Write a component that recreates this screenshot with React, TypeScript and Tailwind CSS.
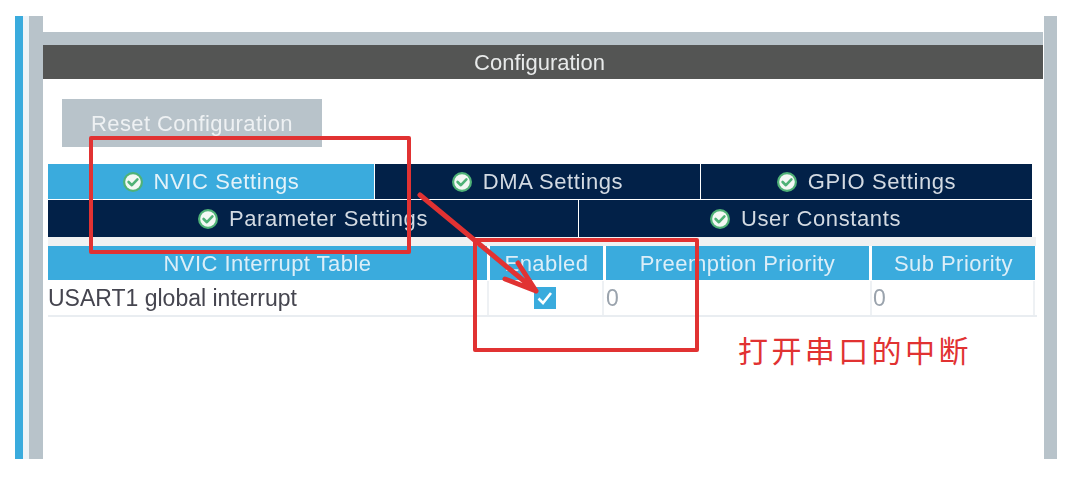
const NAVY = "flex items-center justify-center gap-[11px] bg-[#022148] text-[#d3dae2]";

function Ok() {
  return (
    <svg width="20" height="20" viewBox="0 0 20 20" className="shrink-0">
      <circle cx="10" cy="10" r="10" fill="#4fb277" />
      <circle cx="10" cy="10" r="7.8" fill="#f3f8f4" />
      <path d="M5.6 10 L8.9 13.2 L14.4 7.4" fill="none" stroke="#4fb277" strokeWidth="2.6" strokeLinecap="round" strokeLinejoin="round" />
    </svg>
  );
}

function Tab({ label, className }: { label: string; className: string }) {
  return (
    <div className={className}>
      <Ok />
      <span>{label}</span>
    </div>
  );
}

export default function App() {
  return (
    <div className="relative h-[478px] w-[1088px] overflow-hidden bg-white pl-[15px] pt-[16px] font-['Liberation_Sans',sans-serif]">
      <div className="flex h-[443px] w-[1042px] blur-[0.6px]">
        <div className="w-[8px] bg-[#3aabdd]" />
        <div className="w-[6px] bg-[#eef3f7]" />
        <div className="w-[14px] bg-[#b8c3ca]" />
        <div className="flex w-[1001px] flex-col pt-[16px]">
          <div className="h-[13px] bg-[#b8c3ca]" />
          <div className="flex h-[34px] items-center justify-center bg-[#545554] pr-[7px] text-[22px] text-[#e8eaea]">
            Configuration
          </div>
          <div className="px-[5px] pt-[20px]">
            <div className="ml-[14px] flex h-[48px] w-[260px] items-center justify-center bg-[#b8c3ca] text-[22px] tracking-[0.4px] text-[#eef1f3]">
              Reset Configuration
            </div>
            <div className="mt-[17px] flex h-[35px] w-[984px] gap-[1px] text-[22px] tracking-[0.6px]">
              <Tab label="NVIC Settings" className="flex w-[326px] items-center justify-center gap-[11px] bg-[#3aabdd] text-[#e3f2f9]" />
              <Tab label="DMA Settings" className={`w-[325px] ${NAVY}`} />
              <Tab label="GPIO Settings" className={`w-[331px] ${NAVY}`} />
            </div>
            <div className="mt-[1px] flex h-[37px] w-[984px] gap-[1px] text-[22px] tracking-[0.6px]">
              <Tab label="Parameter Settings" className={`w-[530px] ${NAVY}`} />
              <Tab label="User Constants" className={`w-[453px] ${NAVY}`} />
            </div>
            <div className="flex h-[9px] w-[988px] bg-[#f0f1f2]" />
            <div className="flex h-[34px] w-[987px] text-[22px] tracking-[0.45px] text-[#dceef8]">
              <div className="flex w-[439px] items-center justify-center bg-[#3aabdd]">NVIC Interrupt Table</div>
              <div className="ml-[3px] flex w-[113px] items-center justify-center bg-[#3aabdd]">Enabled</div>
              <div className="ml-[3px] flex w-[263px] items-center justify-center bg-[#3aabdd]">Preemption Priority</div>
              <div className="ml-[3px] flex w-[163px] items-center justify-center bg-[#3aabdd]">Sub Priority</div>
            </div>
            <div className="mt-[1px] flex h-[36px] w-[989px] border-b-2 border-[#e9edf1] text-[23px] text-[#45454f]">
              <div className="flex w-[439px] items-center">USART1 global interrupt</div>
              <div className="flex w-[117px] items-center justify-center border-x-2 border-[#eef1f4]">
                <div className="flex h-[22px] w-[22px] items-center justify-center bg-[#3aabdd]">
                  <svg width="22" height="22" viewBox="0 0 22 22">
                    <path d="M4.5 11.5 L9 16 L17 6" fill="none" stroke="#fff" strokeWidth="2.6" />
                  </svg>
                </div>
              </div>
              <div className="flex w-[266px] items-center pl-[2px] text-[#9aa3ad]">0</div>
              <div className="flex w-[165px] items-center border-x-2 border-[#eef1f4] pl-[1px] text-[#9aa3ad]">0</div>
            </div>
          </div>
        </div>
        <div className="ml-[1px] w-[13px] bg-[#b8c3ca]" />
      </div>

      <div className="absolute left-[89px] top-[136px] h-[118px] w-[322px] rounded-[2px] border-[4.5px] border-[#e13232]" />
      <div className="absolute left-[473px] top-[238px] h-[114px] w-[226px] rounded-[2px] border-[4.5px] border-[#e13232]" />
      <svg className="absolute left-0 top-0" width="1088" height="478" viewBox="0 0 1088 478">
        <path d="M420 195 L536 291 M505 279 L536 291 L518 263" fill="none" stroke="#e13232" strokeWidth="5" strokeLinecap="round" strokeLinejoin="round" />
      </svg>
      <div className="absolute left-[738px] top-[329px] whitespace-nowrap font-['Noto_Sans_CJK_SC',sans-serif] text-[30px] font-normal leading-[40px] tracking-[3.4px] text-[#e13232]">
        打开串口的中断
      </div>
    </div>
  );
}
